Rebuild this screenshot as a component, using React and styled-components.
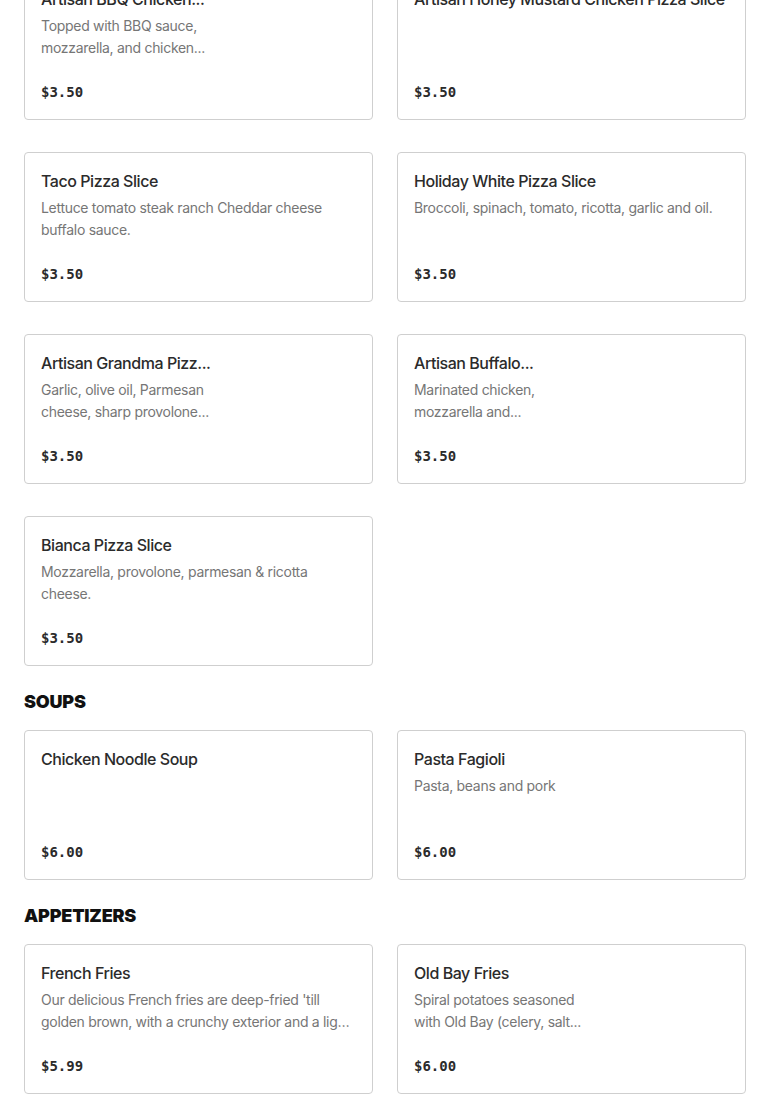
import React from 'react';
import styled, { createGlobalStyle } from 'styled-components';

const GlobalStyle = createGlobalStyle`
  body {
    margin: 0;
    background: #fff;
    font-family: Inter, "Liberation Sans", Arial, sans-serif;
    color: #2d2d2d;
  }
`;

const Page = styled.main`
  padding: 0 24px;
  margin-top: -30px;
`;

const Section = styled.section`
  & + & {
    margin-top: 24px;
  }
`;

const SectionTitle = styled.h2`
  margin: 0 0 16px;
  font-size: 18px;
  line-height: 24px;
  font-weight: 900;
  letter-spacing: -0.2px;
  color: #111;
  text-transform: uppercase;
`;

const Grid = styled.div`
  display: grid;
  grid-template-columns: minmax(0, 1fr) minmax(0, 1fr);
  column-gap: 24px;
  row-gap: 32px;
`;

const Card = styled.article`
  box-sizing: border-box;
  min-width: 0;
  height: 150px;
  border: 1px solid #cfcfcf;
  border-radius: 4px;
  padding: 16px;
  display: flex;
  flex-direction: column;
  background: #fff;
`;

const Body = styled.div`
  max-width: ${({ $narrow }) => ($narrow ? '178px' : 'none')};
`;

const Title = styled.h3`
  margin: 0;
  font-size: 16px;
  line-height: 24px;
  font-weight: 500;
  letter-spacing: -0.45px;
  color: #2b2b2b;
  white-space: nowrap;
  overflow: hidden;
  text-overflow: ellipsis;
`;

const Description = styled.p`
  margin: 4px 0 0;
  font-size: 14px;
  line-height: 22px;
  letter-spacing: -0.3px;
  color: #767676;
  display: -webkit-box;
  -webkit-line-clamp: 2;
  -webkit-box-orient: vertical;
  overflow: hidden;
`;

const Price = styled.span`
  margin-top: auto;
  font-family: "DejaVu Sans Mono", "Liberation Mono", monospace;
  font-size: 14px;
  line-height: 22px;
  font-weight: 600;
  color: #2b2b2b;
`;

const sections = [
  {
    title: 'Pizza',
    hideTitle: true,
    items: [
      { name: 'Artisan BBQ Chicken...', desc: 'Topped with BBQ sauce, mozzarella, and chicken...', price: '$3.50', narrow: true },
      { name: 'Artisan Honey Mustard Chicken Pizza Slice', desc: '', price: '$3.50' },
      { name: 'Taco Pizza Slice', desc: 'Lettuce tomato steak ranch Cheddar cheese buffalo sauce.', price: '$3.50' },
      { name: 'Holiday White Pizza Slice', desc: 'Broccoli, spinach, tomato, ricotta, garlic and oil.', price: '$3.50' },
      { name: 'Artisan Grandma Pizz...', desc: 'Garlic, olive oil, Parmesan cheese, sharp provolone...', price: '$3.50', narrow: true },
      { name: 'Artisan Buffalo...', desc: 'Marinated chicken, mozzarella and...', price: '$3.50', narrow: true },
      { name: 'Bianca Pizza Slice', desc: 'Mozzarella, provolone, parmesan & ricotta cheese.', price: '$3.50' },
    ],
  },
  {
    title: 'Soups',
    items: [
      { name: 'Chicken Noodle Soup', desc: '', price: '$6.00' },
      { name: 'Pasta Fagioli', desc: 'Pasta, beans and pork', price: '$6.00' },
    ],
  },
  {
    title: 'Appetizers',
    items: [
      { name: 'French Fries', desc: "Our delicious French fries are deep-fried 'till golden brown, with a crunchy exterior and a light fluffy interior.", price: '$5.99' },
      { name: 'Old Bay Fries', desc: 'Spiral potatoes seasoned with Old Bay (celery, salt...', price: '$6.00', narrow: true },
    ],
  },
];

const MenuCard = ({ name, desc, price, narrow }) => (
  <Card>
    <Body $narrow={narrow}>
      <Title>{name}</Title>
      {desc && <Description>{desc}</Description>}
    </Body>
    <Price>{price}</Price>
  </Card>
);

const App = () => (
  <>
    <GlobalStyle />
    <Page>
      {sections.map((section) => (
        <Section key={section.title}>
          {!section.hideTitle && <SectionTitle>{section.title}</SectionTitle>}
          <Grid>
            {section.items.map((item) => (
              <MenuCard key={item.name} {...item} />
            ))}
          </Grid>
        </Section>
      ))}
    </Page>
  </>
);

export default App;
